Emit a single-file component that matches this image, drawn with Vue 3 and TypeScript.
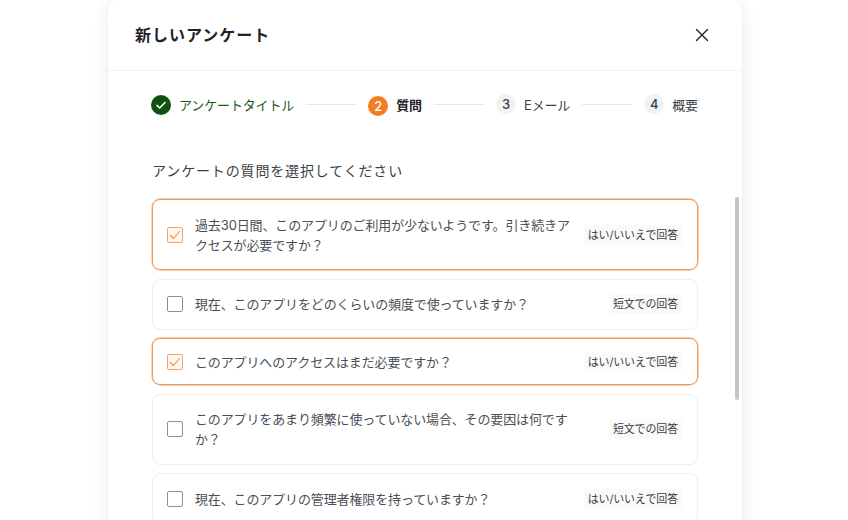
<template>
  <div class="page">
    <div class="modal">
      <header class="head">
        <h1>新しいアンケート</h1>
        <svg class="close" width="14" height="14" viewBox="0 0 14 14" aria-label="閉じる">
          <path d="M1.5 1.5l11 11M12.5 1.5l-11 11" stroke="#1f2329" stroke-width="1.4" stroke-linecap="round" />
        </svg>
      </header>

      <div class="body">
        <div class="steps">
          <template v-for="(step, i) in steps" :key="step.label">
            <div class="line" v-if="i > 0"></div>
            <div class="step" :class="step.state">
              <span class="dot">
                <svg v-if="step.state === 'done'" width="12" height="12" viewBox="0 0 12 12">
                  <path d="M2 6.4l2.7 2.6L10 3.4" fill="none" stroke="#fff" stroke-width="1.5" stroke-linecap="round" stroke-linejoin="round" />
                </svg>
                <template v-else>{{ i + 1 }}</template>
              </span>
              <span class="step-label">{{ step.label }}</span>
            </div>
          </template>
        </div>

        <h2>アンケートの質問を選択してください</h2>

        <div class="list">
          <div v-for="q in questions" :key="q.text" class="item" :class="{ checked: q.checked, slim: q.slim }">
            <span class="box">
              <svg v-if="q.checked" width="12" height="12" viewBox="0 0 12 12">
                <path d="M1.5 6.5l3 3L10.5 2.5" fill="none" stroke="#f08a3c" stroke-width="1.1" stroke-linecap="round" stroke-linejoin="round" />
              </svg>
            </span>
            <p>{{ q.text }}</p>
            <span class="badge">{{ q.badge }}</span>
          </div>
        </div>
      </div>

      <div class="scrollbar"></div>
    </div>
  </div>
</template>

<script setup lang="ts">
interface Step {
  label: string
  state: 'done' | 'active' | 'todo'
}

interface Question {
  text: string
  badge: string
  checked?: boolean
  slim?: boolean
}

const yesNo = 'はい/いいえで回答'
const short = '短文での回答'

const steps: Step[] = [
  { label: 'アンケートタイトル', state: 'done' },
  { label: '質問', state: 'active' },
  { label: 'Eメール', state: 'todo' },
  { label: '概要', state: 'todo' },
]

const questions: Question[] = [
  { text: '過去30日間、このアプリのご利用が少ないようです。引き続きアクセスが必要ですか？', badge: yesNo, checked: true },
  { text: '現在、このアプリをどのくらいの頻度で使っていますか？', badge: short },
  { text: 'このアプリへのアクセスはまだ必要ですか？', badge: yesNo, checked: true, slim: true },
  { text: 'このアプリをあまり頻繁に使っていない場合、その要因は何ですか？', badge: short },
  { text: '現在、このアプリの管理者権限を持っていますか？', badge: yesNo },
]
</script>

<style>
html,
body {
  margin: 0;
  background: #fff;
  overflow: hidden;
}
</style>

<style scoped>
.page {
  width: 848px;
  height: 520px;
  overflow: hidden;
  padding-left: 108px;
  box-sizing: border-box;
  font-family: "Inter", "Noto Sans CJK JP", sans-serif;
  color: #3a3f46;
}

.modal {
  position: relative;
  width: 634px;
  height: 560px;
  margin-top: -1px;
  background: #fff;
  border-radius: 14px;
  box-shadow: 0 2px 16px rgba(30, 40, 60, 0.1);
}

.head {
  display: flex;
  align-items: center;
  justify-content: space-between;
  height: 72px;
  padding: 0 33px 2px 27px;
  border-bottom: 1px solid #f1f2f4;
  box-sizing: border-box;
}

h1 {
  margin: 0;
  font-size: 16px;
  font-weight: 700;
  letter-spacing: 1px;
  color: #1f2329;
}

.close {
  margin-top: 2px;
}

.body {
  padding: 20px 44px 0;
}

.steps {
  display: flex;
  align-items: center;
  justify-content: space-between;
  height: 26px;
  margin-left: -1px;
}

.step {
  display: flex;
  align-items: center;
  gap: 8px;
  font-size: 13px;
  letter-spacing: -0.15px;
}

.dot {
  width: 20px;
  height: 20px;
  border-radius: 50%;
  display: flex;
  align-items: center;
  justify-content: center;
  font-size: 13px;
  font-weight: 500;
  letter-spacing: 0;
  background: #f1f2f4;
  color: #3a3f46;
}

.step.done .dot {
  margin-top: 2px;
  background: #11500f;
}

.step.done .step-label {
  color: #1d5a1b;
}

.step.active .dot {
  margin-top: 3px;
  background: #f57c22;
  color: #fff;
}

.step.active .step-label {
  font-weight: 600;
  color: #1f2329;
}

.step.todo .dot {
  margin-bottom: 1px;
}

.line {
  flex: none;
  width: 50px;
  height: 1px;
  background: #e4e6e9;
}

h2 {
  margin: 42px 0 0;
  font-size: 14px;
  line-height: 24px;
  font-weight: 400;
  letter-spacing: 0.85px;
  color: #3a3f46;
}

.list {
  display: flex;
  flex-direction: column;
  gap: 8.5px;
  margin-top: 16px;
}

.item {
  display: flex;
  align-items: center;
  padding: 14.5px 15px 14.5px 14px;
  border: 1px solid #eceef0;
  border-radius: 8px;
  box-sizing: border-box;
}

.item.slim {
  padding-top: 12.5px;
  padding-bottom: 12.5px;
}

.item.checked {
  border-color: #ea9c60;
  box-shadow: 0 0 0 0.4px #ea9c60;
}

.box {
  width: 16px;
  height: 16px;
  flex: none;
  display: flex;
  align-items: center;
  justify-content: center;
  margin-right: 12px;
  border: 1.5px solid #8b8f95;
  border-radius: 2px;
  box-sizing: border-box;
}

.item.checked .box {
  border-color: #f0a673;
  background: #fff6ef;
}

p {
  flex: none;
  width: 380px;
  margin: 0;
  font-size: 13px;
  line-height: 20px;
  letter-spacing: -0.13px;
  color: #4a4f56;
}

.badge {
  flex: none;
  margin-left: auto;
  padding: 2px 4px;
  border-radius: 3px;
  background: #fafafb;
  font-size: 11px;
  line-height: 16px;
  letter-spacing: -0.15px;
  color: #3a3f46;
}

.scrollbar {
  position: absolute;
  top: 198px;
  right: 3px;
  width: 4px;
  height: 203px;
  border-radius: 2px;
  background: #c4c6c9;
}
</style>
